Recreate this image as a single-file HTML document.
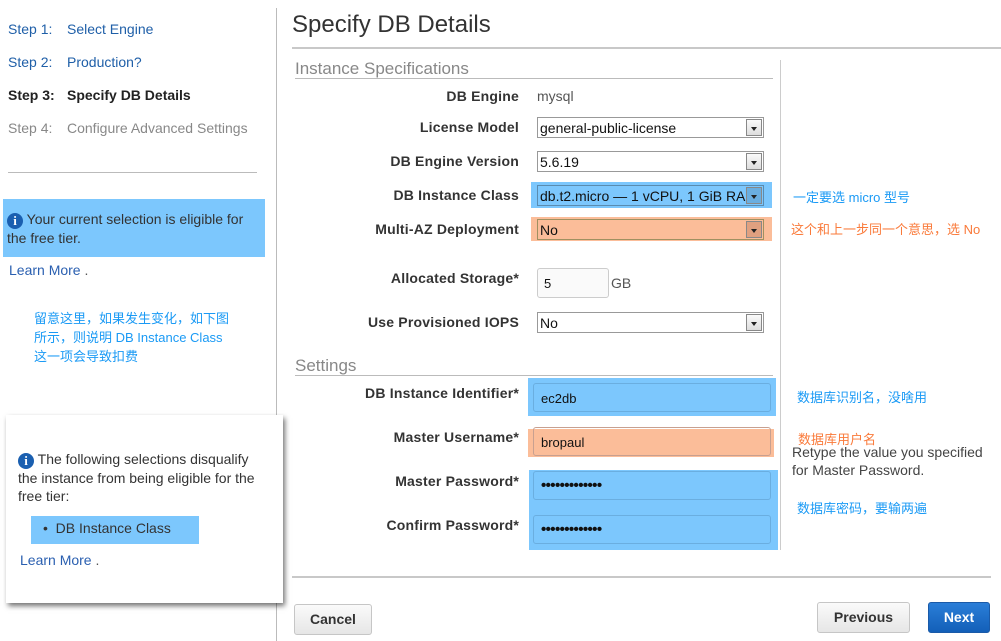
<!DOCTYPE html>
<html><head><meta charset="utf-8"><style>
*{margin:0;padding:0;box-sizing:border-box}
body{width:1001px;height:641px;background:#fff;position:relative;overflow:hidden;font-family:"Liberation Sans",Arial,sans-serif;color:#333;font-size:14px}
.a{position:absolute;white-space:nowrap}
.cn{font-family:"Liberation Sans","Noto Sans CJK SC",sans-serif;font-size:13px;color:#1a9af5}
.lbl{position:absolute;right:482px;font-weight:bold;font-size:14px;color:#333;white-space:nowrap;letter-spacing:0.2px}
.sel{position:absolute;left:537px;width:227px;height:21px;border:1px solid #999;background:#fff;font-size:14px;padding:2px 0 0 2px;white-space:nowrap;overflow:hidden;color:#111}
.sel .ar{position:absolute;right:1px;top:1px;width:16px;height:17px;border:1px solid #888;background:linear-gradient(#fafafa,#ddd)}
.sel .ar:after{content:"";position:absolute;left:4px;top:7px;border:3px solid transparent;border-top:4px solid #222}
.inp{position:absolute;left:533px;width:238px;height:29px;border:1px solid #6aaee0;border-radius:3px;font-size:13px;padding:7px 0 0 7px;color:#111}
.pw{font-size:15px;font-weight:bold;letter-spacing:-0.6px;padding-top:5px}
.btn{position:absolute;height:31px;border:1px solid #c6c6c6;border-radius:3px;background:linear-gradient(#fafafa,#e6e6e6);font-weight:bold;font-size:14px;text-align:center;line-height:29px;color:#333}
.info{display:inline-block;width:16px;height:16px;border-radius:50%;background:#1a5fb0;color:#fff;font-family:"Liberation Serif",serif;font-weight:bold;font-size:13px;text-align:center;line-height:16px;vertical-align:-1px}
</style></head><body>
<div class="a" style="left:276px;top:8px;width:1px;height:633px;background:#bbb"></div>
<div class="a" style="left:8px;top:21px;color:#1f5fa8">Step 1:</div><div class="a" style="left:67px;top:21px;color:#1f5fa8">Select Engine</div>
<div class="a" style="left:8px;top:54px;color:#1f5fa8">Step 2:</div><div class="a" style="left:67px;top:54px;color:#1f5fa8">Production?</div>
<div class="a" style="left:8px;top:87px;color:#222;font-weight:bold">Step 3:</div><div class="a" style="left:67px;top:87px;color:#222;font-weight:bold">Specify DB Details</div>
<div class="a" style="left:8px;top:120px;color:#888">Step 4:</div><div class="a" style="left:67px;top:120px;color:#888">Configure Advanced Settings</div>
<div class="a" style="left:8px;top:172px;width:249px;height:1px;background:#bbb"></div>
<div class="a" style="left:3px;top:199px;width:262px;height:58px;background:#7cc7fd"></div>
<div class="a" style="left:7px;top:210px;line-height:19px;white-space:normal;width:255px"><span class="info">i</span> Your current selection is eligible for the free tier.</div>
<div class="a" style="left:9px;top:262px;color:#2a5fb0">Learn More <span style="color:#555">.</span></div>
<div class="a cn" style="left:34px;top:309px;line-height:19px">留意这里，如果发生变化，如下图<br>所示，则说明 DB Instance Class<br>这一项会导致扣费</div>
<div class="a" style="left:6px;top:415px;width:277px;height:188px;background:#fff;box-shadow:2px 3px 5px rgba(0,0,0,.55)"></div>
<div class="a" style="left:18px;top:450px;width:245px;white-space:normal;line-height:18px"><span class="info">i</span> The following selections disqualify the instance from being eligible for the free tier:</div>
<div class="a" style="left:31px;top:516px;width:168px;height:28px;background:#7cc7fd;padding:4px 0 0 12px">•&nbsp;&nbsp;DB Instance Class</div>
<div class="a" style="left:20px;top:552px;color:#2a5fb0">Learn More <span style="color:#555">.</span></div>

<div class="a" style="left:292px;top:11px;font-size:24px;color:#333">Specify DB Details</div>
<div class="a" style="left:292px;top:47px;width:709px;height:2px;background:#c8c8c8"></div>
<div class="a" style="left:295px;top:59px;font-size:17px;color:#888">Instance Specifications</div>
<div class="a" style="left:295px;top:78px;width:478px;height:1px;background:#bbb"></div>
<div class="a" style="left:780px;top:60px;width:1px;height:490px;background:#ccc"></div>

<div class="lbl" style="top:88px">DB Engine</div><div class="a" style="left:537px;top:88px;color:#555">mysql</div>
<div class="lbl" style="top:119px">License Model</div><div class="sel" style="top:117px">general-public-license<div class="ar"></div></div>
<div class="lbl" style="top:153px">DB Engine Version</div><div class="sel" style="top:151px">5.6.19<div class="ar"></div></div>
<div class="a" style="left:531px;top:182px;width:241px;height:26px;background:#7cc7fd"></div>
<div class="lbl" style="top:187px">DB Instance Class</div><div class="sel" style="top:185px;background:#7cc7fd;border-color:#5a8cb0">db.t2.micro — 1 vCPU, 1 GiB RAM<div class="ar" style="background:#6aaee0"></div></div>
<div class="a" style="left:531px;top:217px;width:241px;height:24px;background:#fbbd99"></div>
<div class="lbl" style="top:221px">Multi-AZ Deployment</div><div class="sel" style="top:219px;background:#fbbd99;border-color:#a09060">No<div class="ar" style="background:#e0a080"></div></div>
<div class="a cn" style="left:793px;top:187px">一定要选 micro 型号</div>
<div class="a cn" style="left:791px;top:219px;color:#fa7a3a">这个和上一步同一个意思，选 No</div>
<div class="lbl" style="top:270px">Allocated Storage*</div>
<div class="a" style="left:537px;top:268px;width:72px;height:30px;border:1px solid #ccc;border-radius:3px;background:#fafafa;padding:7px 0 0 6px;font-size:13px;color:#111">5</div>
<div class="a" style="left:611px;top:275px;color:#555">GB</div>
<div class="lbl" style="top:314px">Use Provisioned IOPS</div><div class="sel" style="top:312px">No<div class="ar"></div></div>

<div class="a" style="left:295px;top:356px;font-size:17px;color:#888">Settings</div>
<div class="a" style="left:295px;top:375px;width:478px;height:1px;background:#bbb"></div>
<div class="lbl" style="top:385px">DB Instance Identifier*</div>
<div class="a" style="left:528px;top:378px;width:248px;height:38px;background:#7cc7fd"></div>
<div class="inp" style="top:383px">ec2db</div>
<div class="lbl" style="top:429px">Master Username*</div>
<div class="a" style="left:528px;top:429px;width:246px;height:28px;background:#fbbd99"></div>
<div class="inp" style="top:427px;border-color:#c8a090">bropaul</div>
<div class="lbl" style="top:473px">Master Password*</div>
<div class="lbl" style="top:517px">Confirm Password*</div>
<div class="a" style="left:529px;top:470px;width:249px;height:80px;background:#7cc7fd"></div>
<div class="inp pw" style="top:471px">•••••••••••••</div>
<div class="inp pw" style="top:515px">•••••••••••••</div>
<div class="a cn" style="left:797px;top:387px">数据库识别名，没啥用</div>
<div class="a cn" style="left:798px;top:429px;color:#fa7a3a">数据库用户名</div>
<div class="a" style="left:792px;top:443px;line-height:18px;color:#444">Retype the value you specified<br>for Master Password.</div>
<div class="a cn" style="left:797px;top:498px">数据库密码，要输两遍</div>

<div class="a" style="left:292px;top:576px;width:699px;height:2px;background:#c8c8c8"></div>
<div class="btn" style="left:294px;top:604px;width:78px">Cancel</div>
<div class="btn" style="left:817px;top:602px;width:93px">Previous</div>
<div class="btn" style="left:928px;top:602px;width:62px;background:linear-gradient(#2a7ed8,#135fb8);border-color:#1a5aa8;color:#fff">Next</div>
</body></html>
